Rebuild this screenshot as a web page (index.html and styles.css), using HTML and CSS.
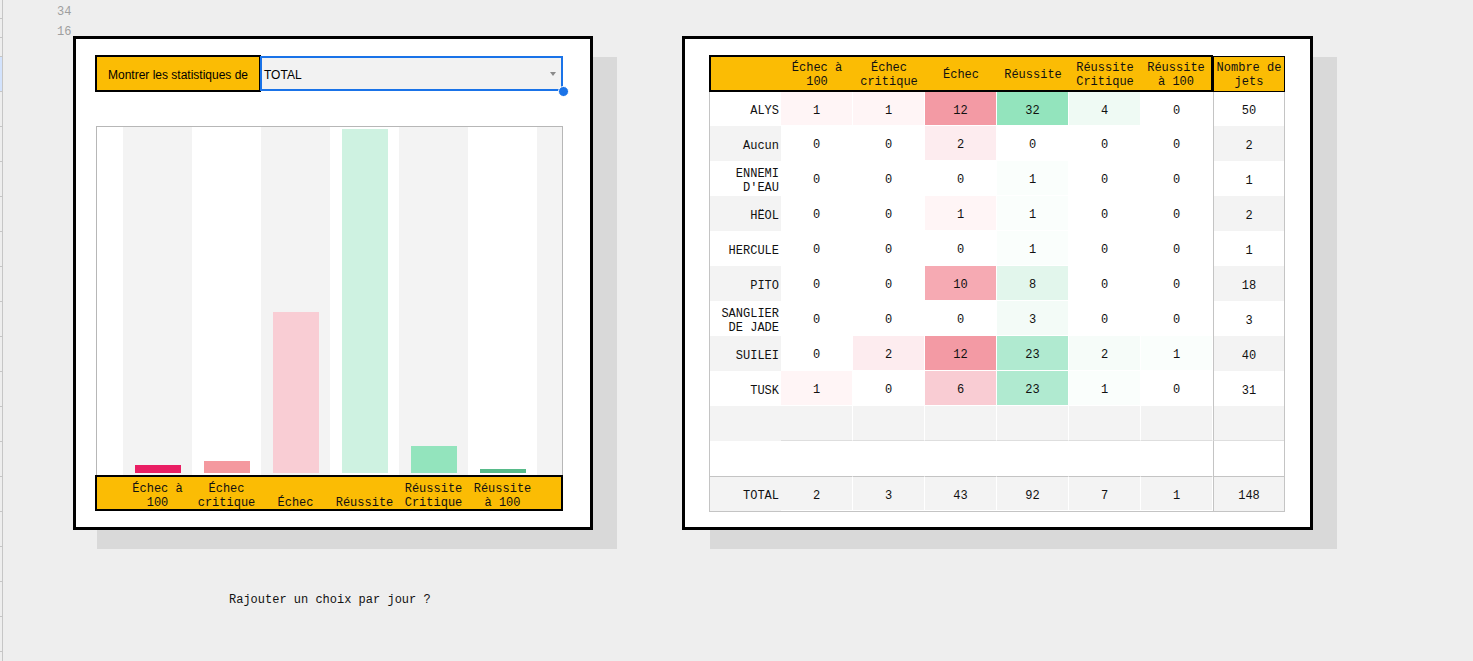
FILE: index.html
```html
<!DOCTYPE html>
<html lang="fr">
<head>
<meta charset="utf-8">
<title>Statistiques des jets</title>
<link rel="stylesheet" href="styles.css">
</head>
<body>
<div class="sheet">
  <div class="gutter">
    <div class="gr s"></div>
    <div class="gr s"></div>
    <div class="gr s"></div>
    <div class="gr sel"></div>
    <div class="gr"></div><div class="gr"></div><div class="gr"></div><div class="gr"></div>
    <div class="gr"></div><div class="gr"></div><div class="gr"></div><div class="gr"></div>
    <div class="gr"></div><div class="gr"></div><div class="gr"></div><div class="gr"></div>
    <div class="gr"></div><div class="gr"></div><div class="gr"></div><div class="gr"></div>
  </div>
  <main class="canvas">
    <div class="topnums"><div>34</div><div>16</div></div>
    <div class="panels">
      <section class="panel panel-chart">
        <div class="control">
          <div class="ctl-label">Montrer les statistiques de</div>
          <div class="ctl-select"><span>TOTAL</span><span class="caret"></span><span class="handle"></span></div>
        </div>
        <div class="chart">
          <div class="plot">
            <div class="cat"></div>
            <div class="cat alt"><div class="bar b1" style="height:8px"></div></div>
            <div class="cat"><div class="bar b2" style="height:12px"></div></div>
            <div class="cat alt"><div class="bar b3" style="height:161px"></div></div>
            <div class="cat"><div class="bar b4" style="height:344px"></div></div>
            <div class="cat alt"><div class="bar b5" style="height:27px"></div></div>
            <div class="cat"><div class="bar b6" style="height:4px"></div></div>
            <div class="cat alt"></div>
          </div>
          <div class="axis">
            <div></div>
            <div class="lab">Échec à<br>100</div>
            <div class="lab">Échec<br>critique</div>
            <div class="lab">Échec</div>
            <div class="lab">Réussite</div>
            <div class="lab">Réussite<br>Critique</div>
            <div class="lab">Réussite<br>à 100</div>
          </div>
        </div>
      </section>

      <section class="panel panel-table">
        <div class="thead">
          <div class="th-main">
            <div class="th"></div>
            <div class="th">Échec à<br>100</div>
            <div class="th">Échec<br>critique</div>
            <div class="th">Échec</div>
            <div class="th">Réussite</div>
            <div class="th">Réussite<br>Critique</div>
            <div class="th">Réussite<br>à 100</div>
          </div>
          <div class="th th-count">Nombre de<br>jets</div>
        </div>
        <div class="tbody">
          <div class="c nm">ALYS</div>
          <div class="c d p1">1</div><div class="c d p1">1</div><div class="c d p12">12</div><div class="c d g32">32</div><div class="c d g4">4</div><div class="c d">0</div>
          <div class="c n">50</div>

          <div class="c nm g">Aucun</div>
          <div class="c d">0</div><div class="c d">0</div><div class="c d p2">2</div><div class="c d">0</div><div class="c d">0</div><div class="c d">0</div>
          <div class="c n g">2</div>

          <div class="c nm">ENNEMI<br>D'EAU</div>
          <div class="c d">0</div><div class="c d">0</div><div class="c d">0</div><div class="c d g1">1</div><div class="c d">0</div><div class="c d">0</div>
          <div class="c n">1</div>

          <div class="c nm g">HËOL</div>
          <div class="c d">0</div><div class="c d">0</div><div class="c d p1">1</div><div class="c d g1">1</div><div class="c d">0</div><div class="c d">0</div>
          <div class="c n g">2</div>

          <div class="c nm">HERCULE</div>
          <div class="c d">0</div><div class="c d">0</div><div class="c d">0</div><div class="c d g1">1</div><div class="c d">0</div><div class="c d">0</div>
          <div class="c n">1</div>

          <div class="c nm g">PITO</div>
          <div class="c d">0</div><div class="c d">0</div><div class="c d p10">10</div><div class="c d g8">8</div><div class="c d">0</div><div class="c d">0</div>
          <div class="c n g">18</div>

          <div class="c nm">SANGLIER<br>DE JADE</div>
          <div class="c d">0</div><div class="c d">0</div><div class="c d">0</div><div class="c d g3">3</div><div class="c d">0</div><div class="c d">0</div>
          <div class="c n">3</div>

          <div class="c nm g">SUILEI</div>
          <div class="c d">0</div><div class="c d p2">2</div><div class="c d p12">12</div><div class="c d g23">23</div><div class="c d g2">2</div><div class="c d g1">1</div>
          <div class="c n g">40</div>

          <div class="c nm">TUSK</div>
          <div class="c d p1">1</div><div class="c d">0</div><div class="c d p6">6</div><div class="c d g23">23</div><div class="c d g1">1</div><div class="c d">0</div>
          <div class="c n">31</div>

          <div class="c nm g"></div>
          <div class="c d g e"></div><div class="c d g e"></div><div class="c d g e"></div><div class="c d g e"></div><div class="c d g e"></div><div class="c d g e"></div>
          <div class="c n g e"></div>

          <div class="c nm"></div>
          <div class="c d"></div><div class="c d"></div><div class="c d"></div><div class="c d"></div><div class="c d"></div><div class="c d"></div>
          <div class="c n"></div>

          <div class="c nm g tr">TOTAL</div>
          <div class="c d g tr">2</div><div class="c d g tr">3</div><div class="c d g tr">43</div><div class="c d g tr">92</div><div class="c d g tr">7</div><div class="c d g tr">1</div>
          <div class="c n g tr">148</div>
        </div>
      </section>
    </div>
    <p class="note">Rajouter un choix par jour ?</p>
  </main>
</div>
</body>
</html>
```

FILE: styles.css
```css
html, body {
  margin: 0;
  padding: 0;
}

body {
  background: #eeeeee;
  font-family: "Liberation Mono", "Courier New", monospace;
  font-size: 12px;
  color: #111;
}

.sheet {
  display: flex;
  height: 661px;
  overflow: hidden;
}

/* row header strip on the far left */
.gutter {
  flex: none;
  width: 2px;
  border-right: 1px solid #c6c6c6;
}

.gr {
  box-sizing: border-box;
  height: 35px;
  border-bottom: 1px solid #c6c6c6;
}

.gr.s {
  height: 19px;
}

.gr.sel {
  background: #d3e3fd;
}

.canvas {
  flex: 1;
}

.topnums {
  box-sizing: border-box;
  height: 36px;
  padding: 2px 0 0 54px;
  line-height: 20px;
  color: #9e9e9e;
}

.panels {
  display: flex;
  align-items: flex-start;
  gap: 89px;
  padding-left: 70px;
}

.panel {
  position: relative;
  box-sizing: border-box;
  height: 494px;
  border: 3px solid #000;
  background: #fff;
}

.panel::before {
  content: "";
  position: absolute;
  z-index: -1;
  top: 18px;
  height: 492px;
  background: #d9d9d9;
}

/* ---------- chart panel ---------- */
.panel-chart {
  width: 520px;
  padding: 16px 27px 0 19px;
}

.panel-chart::before {
  left: 21px;
  width: 520px;
}

.control {
  display: flex;
  align-items: center;
  height: 37px;
}

.ctl-label {
  flex: none;
  box-sizing: border-box;
  width: 166px;
  height: 37px;
  padding-top: 2px;
  border: 2px solid #000;
  background: #fbbc04;
  display: flex;
  align-items: center;
  justify-content: center;
  font-family: "Liberation Sans", Arial, sans-serif;
  font-size: 12px;
  color: #000;
}

.ctl-select {
  position: relative;
  flex: 1;
  margin-left: -1px;
  box-sizing: border-box;
  height: 35px;
  border: 2px solid #1a73e8;
  background: #f2f2f2;
  display: flex;
  align-items: center;
  padding: 2px 0 0 2px;
  font-family: "Liberation Sans", Arial, sans-serif;
  font-size: 12px;
  color: #000;
}

.caret {
  position: absolute;
  right: 5px;
  top: 50%;
  margin-top: -2px;
  width: 0;
  height: 0;
  border-left: 3.5px solid transparent;
  border-right: 3.5px solid transparent;
  border-top: 4px solid #8a8a8a;
}

.handle {
  position: absolute;
  right: -8px;
  bottom: -8px;
  width: 9px;
  height: 9px;
  border-radius: 50%;
  border: 1px solid #fff;
  background: #1a73e8;
}

.chart {
  margin-top: 34px;
}

.plot {
  box-sizing: border-box;
  margin-left: 1px;
  width: 467px;
  height: 349px;
  border: 1px solid #b7b7b7;
  border-bottom: 0;
  display: grid;
  grid-template-columns: 26px repeat(6, 69px) 1fr;
}

.cat {
  display: flex;
  flex-direction: column;
  justify-content: flex-end;
  align-items: center;
  padding-bottom: 2px;
}

.cat.alt {
  background: #f3f3f3;
}

.bar {
  width: 46px;
}

.b1 { background: #e91e63; }
.b2 { background: #f4999f; }
.b3 { background: #f9cdd4; }
.b4 { background: #cef2e1; }
.b5 { background: #93e4bd; }
.b6 { background: #57bb8a; }

.axis {
  box-sizing: border-box;
  width: 468px;
  height: 36px;
  border: 2px solid #000;
  background: #fbbc04;
  display: grid;
  grid-template-columns: 26px repeat(6, 69px);
  align-items: end;
}

.lab {
  text-align: center;
  line-height: 14px;
  white-space: nowrap;
  margin-bottom: -1px;
}

/* ---------- table panel ---------- */
.panel-table {
  width: 631px;
  padding: 16px 0 0 24px;
}

.panel-table::before {
  left: 25px;
  width: 627px;
}

.thead {
  display: flex;
  align-items: flex-end;
}

.th-main {
  box-sizing: border-box;
  width: 504px;
  height: 37px;
  border: 2px solid #000;
  background: #fbbc04;
  display: grid;
  grid-template-columns: 70px repeat(5, 72px) 70px;
}

.th {
  box-sizing: border-box;
  display: flex;
  align-items: center;
  justify-content: center;
  text-align: center;
  line-height: 14px;
  white-space: nowrap;
  padding-top: 2px;
}

.th-count {
  width: 72px;
  height: 36px;
  border: 1px solid #000;
  background: #fbbc04;
}

.tbody {
  box-sizing: border-box;
  width: 576px;
  border: 1px solid #c4c4c4;
  border-top: 0;
  display: grid;
  grid-template-columns: 71px repeat(6, 72px) 71px;
  grid-template-rows: 34px repeat(11, 35px);
}

.c {
  box-sizing: border-box;
  display: flex;
  align-items: center;
  justify-content: center;
  text-align: center;
  line-height: 14px;
  white-space: nowrap;
  padding-top: 4px;
}

.nm {
  justify-content: flex-end;
  text-align: right;
  padding-right: 2px;
}

.d {
  border-right: 1px solid #fff;
  border-bottom: 1px solid #fff;
}

.n {
  border-left: 1px solid #c4c4c4;
}

.g {
  background: #f3f3f3;
}

.d.e,
.n.e {
  border-bottom: 1px solid #dedede;
}

.tr {
  border-top: 1px solid #c4c4c4;
}

/* heat map shades */
.p1 { background: #fff5f6; }
.p2 { background: #fdecef; }
.p6 { background: #f9ccd3; }
.p10 { background: #f6aab3; }
.p12 { background: #f39aa4; }

.g1 { background: #fafefc; }
.g2 { background: #f6fcf9; }
.g3 { background: #f3fbf7; }
.g4 { background: #effaf4; }
.g8 { background: #e2f6ec; }
.g23 { background: #b0ead0; }
.g32 { background: #93e4bd; }

.note {
  margin: 63px 0 0 226px;
  line-height: 14px;
  color: #111;
}
```
